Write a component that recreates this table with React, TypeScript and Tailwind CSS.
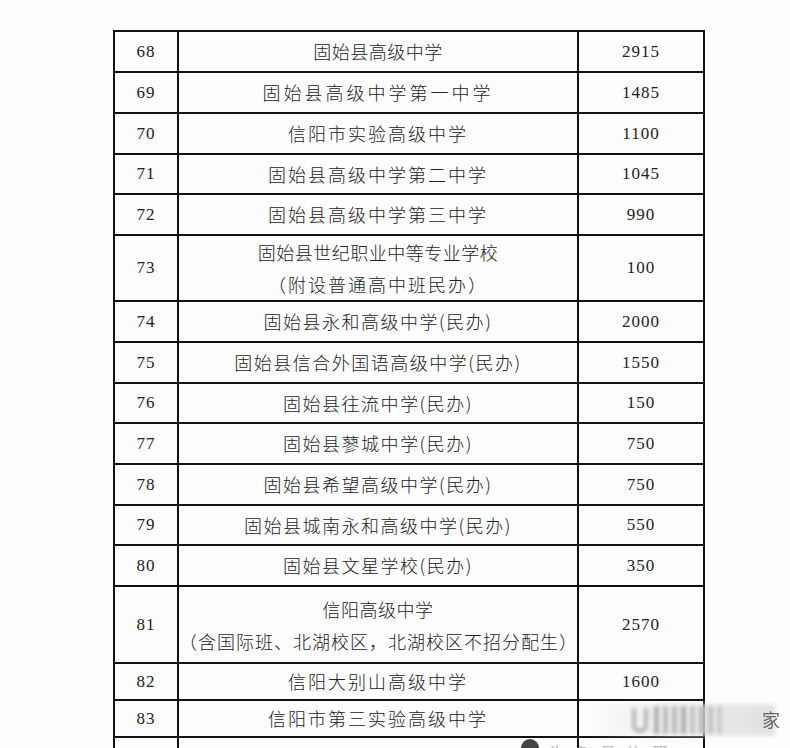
import React from 'react';

type Row = {
  no: string;
  name: string[];
  count: string;
  h: number;
  track?: string[];
};

const rows: Row[] = [
  { no: '68', name: ['固始县高级中学'], count: '2915', h: 41, track: ['tracking-[0.5px]'] },
  { no: '69', name: ['固始县高级中学第一中学'], count: '1485', h: 41, track: ['tracking-[3px]'] },
  { no: '70', name: ['信阳市实验高级中学'], count: '1100', h: 41, track: ['tracking-[2px]'] },
  { no: '71', name: ['固始县高级中学第二中学'], count: '1045', h: 40, track: ['tracking-[2px]'] },
  { no: '72', name: ['固始县高级中学第三中学'], count: '990', h: 41, track: ['tracking-[2px]'] },
  {
    no: '73',
    name: ['固始县世纪职业中等专业学校', '（附设普通高中班民办）'],
    count: '100',
    h: 66,
    track: ['tracking-[0.5px]', 'tracking-[2px]'],
  },
  { no: '74', name: ['固始县永和高级中学(民办)'], count: '2000', h: 41, track: ['tracking-[1.5px]'] },
  { no: '75', name: ['固始县信合外国语高级中学(民办)'], count: '1550', h: 41, track: ['tracking-[1.5px]'] },
  { no: '76', name: ['固始县往流中学(民办)'], count: '150', h: 40, track: ['tracking-[1.5px]'] },
  { no: '77', name: ['固始县蓼城中学(民办)'], count: '750', h: 41, track: ['tracking-[1.5px]'] },
  { no: '78', name: ['固始县希望高级中学(民办)'], count: '750', h: 41, track: ['tracking-[1.5px]'] },
  { no: '79', name: ['固始县城南永和高级中学(民办)'], count: '550', h: 40, track: ['tracking-[1.5px]'] },
  { no: '80', name: ['固始县文星学校(民办)'], count: '350', h: 41, track: ['tracking-[1.5px]'] },
  {
    no: '81',
    name: ['信阳高级中学', '（含国际班、北湖校区，北湖校区不招分配生）'],
    count: '2570',
    h: 77,
    track: ['tracking-[0.5px]', 'tracking-[1px]'],
  },
  { no: '82', name: ['信阳大别山高级中学'], count: '1600', h: 37, track: ['tracking-[2px]'] },
  { no: '83', name: ['信阳市第三实验高级中学'], count: '', h: 37, track: ['tracking-[2px]'] },
  { no: '', name: [''], count: '', h: 41 },
];

const cjk = "font-['Noto_Sans_CJK_SC',sans-serif]";
const num = "font-['Liberation_Serif',serif]";

export default function App() {
  return (
    <div className="relative w-[790px] h-[748px] overflow-hidden bg-[#fdfdfd] text-[#222]">
      <div className="pt-[30px] pl-[113px]">
        <table className="table-fixed border-collapse w-[590px]">
          <colgroup>
            <col className="w-[64px]" />
            <col className="w-[400px]" />
            <col className="w-[126px]" />
          </colgroup>
          <tbody>
            {rows.map((r, idx) => (
              <tr key={`${idx}-row`} style={{ height: r.h }}>
                <td className={`border-2 border-[#111] p-0 text-center text-[17px] tracking-[1px] ${num}`}>
                  {r.no}
                </td>
                <td className={`border-2 border-[#111] p-0 text-center text-[18px] font-light ${cjk} ${r.name.length > 1 ? 'leading-[32px]' : 'leading-[31px]'}`}>
                  {r.name.map((line, i) => (
                    <div key={`${i}-line`} className={r.track?.[i] ?? ''}>
                      {line}
                    </div>
                  ))}
                </td>
                <td className={`border-2 border-[#111] p-0 text-center text-[17px] tracking-[1px] ${num}`}>
                  {r.count}
                </td>
              </tr>
            ))}
          </tbody>
        </table>
      </div>

      {/* blurred watermark smear over row 83 */}
      <div className="absolute left-[585px] top-[704px] w-[190px] h-[32px] blur-[2px]">
        <div className="absolute inset-0 bg-gradient-to-r from-transparent via-[#e6e6e6] to-[#dadada] opacity-80" />
        <div className="absolute left-[48px] top-[4px] w-[14px] h-[24px] border-2 border-t-0 border-[#777] rounded-b-[7px]" />
        <div className="absolute left-[70px] top-[2px] flex gap-[6px]">
          <div className="w-[3px] h-[28px] bg-[#888]" />
          <div className="w-[3px] h-[28px] bg-[#999]" />
          <div className="w-[3px] h-[28px] bg-[#999]" />
          <div className="w-[3px] h-[28px] bg-[#888]" />
          <div className="w-[3px] h-[28px] bg-[#aaa]" />
          <div className="w-[3px] h-[28px] bg-[#999]" />
          <div className="w-[3px] h-[28px] bg-[#aaa]" />
          <div className="w-[3px] h-[28px] bg-[#bbb]" />
        </div>
      </div>
      <div className={`absolute left-[762px] top-[706px] text-[18px] text-[#666] blur-[0.5px] ${cjk}`}>家</div>

      {/* cut-off watermark badge at bottom */}
      <div className="absolute left-[521px] top-[739px] w-[18px] h-[18px] rounded-full bg-[#444]" />
      <div className={`absolute left-[548px] top-[740px] text-[16px] text-[#bbb] tracking-[10px] ${cjk}`}>头条号信阳</div>
    </div>
  );
}
